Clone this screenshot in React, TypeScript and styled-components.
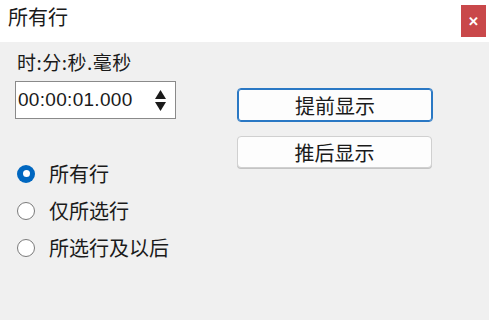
import React, { useState } from "react";
import styled, { createGlobalStyle } from "styled-components";

const GlobalStyle = createGlobalStyle`
  html, body {
    margin: 0;
    padding: 0;
    background: #f0f0f0;
  }
  body {
    font-family: "Noto Sans CJK SC", "Noto Sans", sans-serif;
    color: #1a1a1a;
  }
`;

const Window = styled.div`
  width: 489px;
  height: 320px;
  display: flex;
  flex-direction: column;
  background: #f0f0f0;
  overflow: hidden;
`;

const TitleBar = styled.div`
  height: 42px;
  background: #ffffff;
  display: flex;
  align-items: flex-start;
  justify-content: space-between;
  padding: 0 3px 0 8px;
  box-sizing: border-box;
`;

const Title = styled.span`
  font-size: 20px;
  line-height: 32px;
  margin-top: 1px;
`;

const CloseButton = styled.button`
  width: 25px;
  height: 32px;
  margin-top: 5px;
  border: none;
  padding: 0;
  background: #c9484a;
  color: #ffffff;
  font-family: "Liberation Sans", Arial, sans-serif;
  font-size: 13px;
  font-weight: bold;
  display: flex;
  align-items: center;
  justify-content: center;
`;

const Body = styled.div`
  display: flex;
  padding: 10px 0 0 15px;
`;

const LeftColumn = styled.div`
  width: 222px;
  display: flex;
  flex-direction: column;
`;

const RightColumn = styled.div`
  display: flex;
  flex-direction: column;
  gap: 14px;
  padding-top: 36px;
`;

const FieldLabel = styled.label`
  font-size: 19px;
  line-height: 20px;
  padding-left: 2px;
  letter-spacing: 0.5px;
`;

const SpinBox = styled.div`
  margin-top: 9px;
  width: 161px;
  height: 38px;
  box-sizing: border-box;
  background: #ffffff;
  border: 1px solid #8a8a8a;
  display: flex;
  align-items: center;
  padding: 0 9px 0 2px;
`;

const SpinInput = styled.input`
  flex: 1;
  min-width: 0;
  border: none;
  outline: none;
  background: transparent;
  font-family: "Liberation Sans", Arial, sans-serif;
  font-size: 19px;
  letter-spacing: 0.3px;
  color: #1a1a1a;
  padding: 0;
`;

const SpinArrows = styled.div`
  display: flex;
  flex-direction: column;
  gap: 3px;
`;

const RadioGroup = styled.div`
  margin-top: 36px;
  display: flex;
  flex-direction: column;
`;

const RadioRow = styled.label`
  height: 37px;
  display: flex;
  align-items: center;
  gap: 14px;
  padding-left: 2px;
  font-size: 20px;
  cursor: default;
`;

const RadioMark = styled.span<{ $checked: boolean }>`
  width: 18px;
  height: 18px;
  box-sizing: border-box;
  border-radius: 50%;
  display: flex;
  align-items: center;
  justify-content: center;
  background: ${(p) => (p.$checked ? "#0067c0" : "#ffffff")};
  border: ${(p) => (p.$checked ? "none" : "1px solid #7a7a7a")};

  &::after {
    content: "";
    width: 7px;
    height: 7px;
    border-radius: 50%;
    background: #ffffff;
    display: ${(p) => (p.$checked ? "block" : "none")};
  }
`;

const ActionButton = styled.button<{ $focused?: boolean; $height: number; $width: number }>`
  width: ${(p) => p.$width}px;
  height: ${(p) => p.$height}px;
  box-sizing: border-box;
  background: #fdfdfd;
  border: 1px solid ${(p) => (p.$focused ? "#2a78c4" : "#d0d0d0")};
  box-shadow: ${(p) => (p.$focused ? "inset 0 0 0 1px #2a78c4" : "0 1px 0 #c4c4c4")};
  border-radius: 4px;
  font-family: "Noto Sans CJK SC", "Noto Sans", sans-serif;
  font-size: 20px;
  color: #1a1a1a;
  padding: 0;
`;

const options = ["所有行", "仅所选行", "所选行及以后"];

const App: React.FC = () => {
  const [selected, setSelected] = useState(0);

  return (
    <Window>
      <GlobalStyle />
      <TitleBar>
        <Title>所有行</Title>
        <CloseButton aria-label="关闭">✕</CloseButton>
      </TitleBar>
      <Body>
        <LeftColumn>
          <FieldLabel>时:分:秒.毫秒</FieldLabel>
          <SpinBox>
            <SpinInput defaultValue="00:00:01.000" />
            <SpinArrows>
              <svg width="11" height="9" viewBox="0 0 11 9">
                <path d="M5.5 0 L11 9 L0 9 Z" fill="#1a1a1a" />
              </svg>
              <svg width="11" height="9" viewBox="0 0 11 9">
                <path d="M0 0 L11 0 L5.5 9 Z" fill="#1a1a1a" />
              </svg>
            </SpinArrows>
          </SpinBox>
          <RadioGroup>
            {options.map((label, i) => (
              <RadioRow key={label} onClick={() => setSelected(i)}>
                <RadioMark $checked={selected === i} />
                {label}
              </RadioRow>
            ))}
          </RadioGroup>
        </LeftColumn>
        <RightColumn>
          <ActionButton $focused $width={196} $height={34}>
            提前显示
          </ActionButton>
          <ActionButton $width={195} $height={32}>
            推后显示
          </ActionButton>
        </RightColumn>
      </Body>
    </Window>
  );
};

export default App;
